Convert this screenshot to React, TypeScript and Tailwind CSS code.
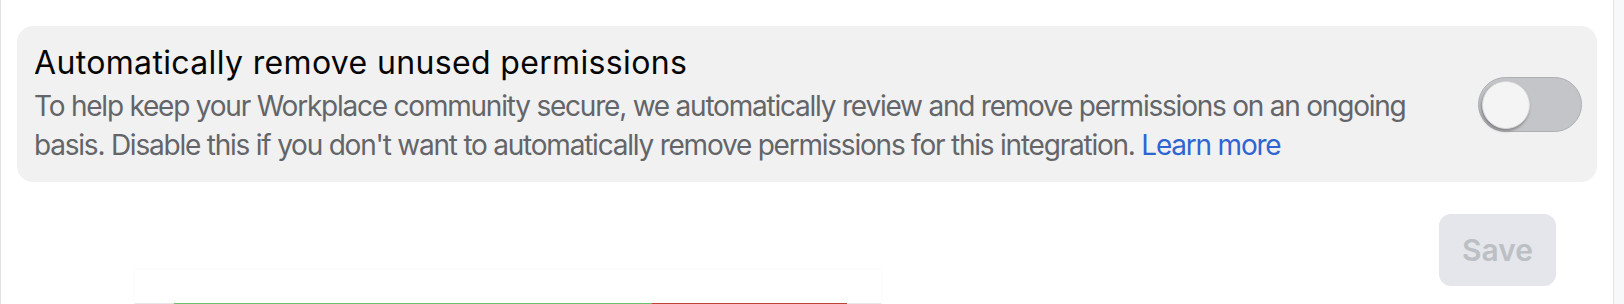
import React from "react";

// ---- Toggle ----

function Toggle() {
  return (
    <div
      role="switch"
      aria-checked="false"
      className="relative h-[55px] w-[104px] shrink-0 rounded-full border border-[#aeafb3] bg-[#c4c5c9]"
    >
      <span className="absolute left-[3px] top-[3px] h-[48px] w-[48px] rounded-full border border-[#d9d9d9] bg-[#f4f4f4] shadow-[-1px_2px_3px_rgba(0,0,0,0.35)]" />
    </div>
  );
}

// ---- Page ----

export default function App() {
  return (
    <div
      className="relative flex h-[304px] w-[1624px] overflow-hidden bg-white"
      style={{ fontFamily: "Inter, 'Noto Sans', sans-serif" }}
    >
      <div className="flex w-[1614px] shrink-0 flex-col border-x border-[#e3e3e3] pl-[16px] pr-[16px] pt-[26px]">
        {/* Setting card */}
        <div className="flex h-[156px] items-center justify-between rounded-[16px] bg-[#f1f1f1] pl-[17px] pr-[15px]">
          <div className="w-[1392px]">
            <h2 className="text-[32px] leading-[40px] font-normal tracking-[0.35px] text-[#050505]">
              Automatically remove unused permissions
            </h2>
            <p className="mt-[4px] text-[28px] leading-[39px] tracking-[-1.22px] text-[#636569]">
              To help keep your Workplace community secure, we automatically
              review and remove permissions on an ongoing basis. Disable this
              if you don't want to automatically remove permissions for this
              integration. <span className="text-[#2f65d1]">Learn more</span>
            </p>
          </div>
          <Toggle />
        </div>

        {/* Action row */}
        <div className="mt-[32px] flex justify-end pr-[41px]">
          <button
            disabled
            className="h-[72px] w-[117px] rounded-[12px] bg-[#e4e6eb] text-[30px] font-semibold text-[#bcc0c4]"
          >
            Save
          </button>
        </div>
      </div>
      <div className="flex-1 bg-[#f7f8fa]" />

      {/* Floating card peeking in at the bottom */}
      <div className="absolute left-[135px] top-[270px] h-[40px] w-[746px] bg-white shadow-[0_0_3px_rgba(0,0,0,0.05)]">
        <div className="absolute bottom-[6px] left-0 flex h-[1px] w-full">
          <span className="w-[39px] bg-[#e6e6e6]" />
          <span className="w-[478px] bg-[#6cc36f]" />
          <span className="w-[195px] bg-[#c0433b]" />
          <span className="flex-1 bg-[#e8e8e8]" />
        </div>
      </div>
    </div>
  );
}
